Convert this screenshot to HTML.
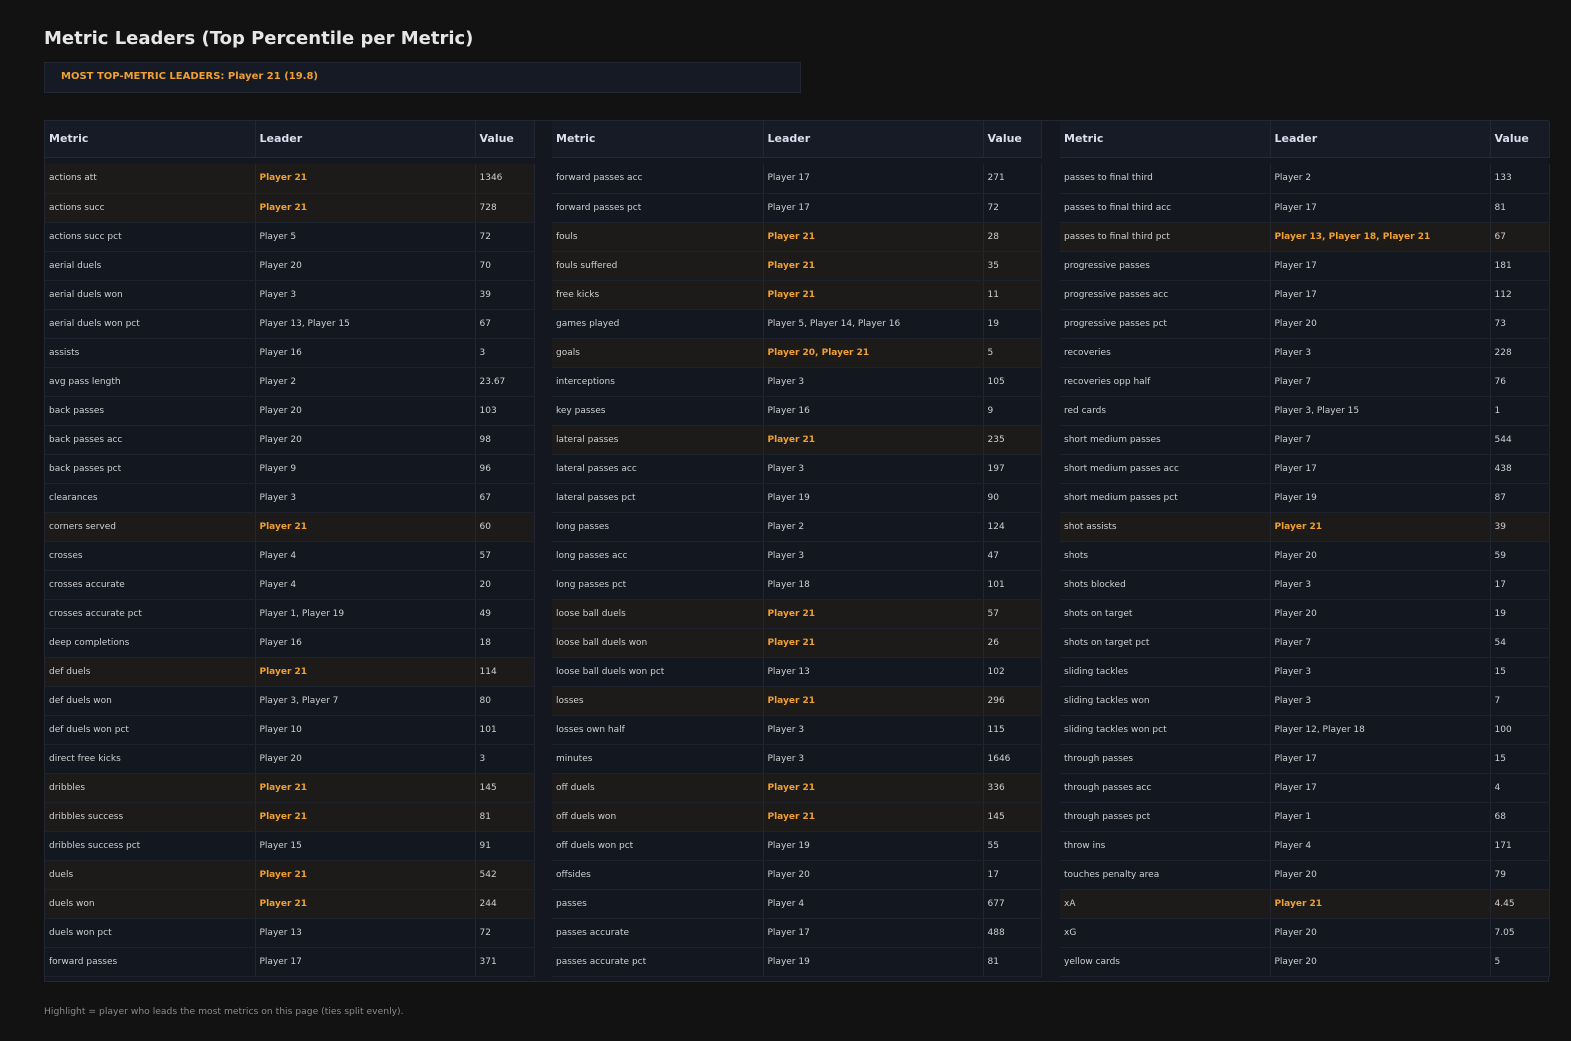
<!DOCTYPE html>
<html><head><meta charset="utf-8"><style>
*{margin:0;padding:0;box-sizing:border-box}
body{width:1571px;height:1041px;background:#121212;font-family:"DejaVu Sans","Liberation Sans",sans-serif;color:#d0d0d0;position:relative;overflow:hidden}
h1{position:absolute;left:44px;top:28px;font-size:18px;font-weight:bold;color:#e6e6e6}
.banner{position:absolute;left:44px;top:62px;width:757px;height:31px;background:#161a24;border:1px solid #232733;color:#f0a030;font-weight:bold;font-size:10px;padding:8px 0 0 16px}
.panel{position:absolute;left:44px;top:120px;width:1505px;height:862px;background:#141720;border:1px solid #232733}
table{position:absolute;top:0;border-collapse:collapse;table-layout:fixed;width:489px}
th{height:36px;background:#171b26;text-align:left;font-size:11px;font-weight:bold;color:#dde;padding-left:4px;border-right:1px solid #232733;border-bottom:1px solid #262a36}
td{height:29px;font-size:9px;color:#cfcfcf;padding-left:4px;border-right:1px solid #222631;border-bottom:1px solid #1e222c;background:#131720;white-space:nowrap}
tr.sp td{height:7px;border:none;background:#141720}
tr.h td{background:#1d1b19}
tr.h td:nth-child(2){color:#f0a030;font-weight:bold}
.foot{position:absolute;left:44px;top:1006px;font-size:9.2px;color:#8a8a8a}
</style></head><body>
<h1>Metric Leaders (Top Percentile per Metric)</h1>
<div class="banner">MOST TOP-METRIC LEADERS: Player 21 (19.8)</div>
<div class="panel">
<table style="left:0"><colgroup><col style="width:210px"><col style="width:220px"><col style="width:59px"></colgroup>
<tr><th>Metric</th><th>Leader</th><th>Value</th></tr><tr class="sp"><td></td><td></td><td></td></tr>
<tr class="h"><td>actions att</td><td>Player 21</td><td>1346</td></tr>
<tr class="h"><td>actions succ</td><td>Player 21</td><td>728</td></tr>
<tr><td>actions succ pct</td><td>Player 5</td><td>72</td></tr>
<tr><td>aerial duels</td><td>Player 20</td><td>70</td></tr>
<tr><td>aerial duels won</td><td>Player 3</td><td>39</td></tr>
<tr><td>aerial duels won pct</td><td>Player 13, Player 15</td><td>67</td></tr>
<tr><td>assists</td><td>Player 16</td><td>3</td></tr>
<tr><td>avg pass length</td><td>Player 2</td><td>23.67</td></tr>
<tr><td>back passes</td><td>Player 20</td><td>103</td></tr>
<tr><td>back passes acc</td><td>Player 20</td><td>98</td></tr>
<tr><td>back passes pct</td><td>Player 9</td><td>96</td></tr>
<tr><td>clearances</td><td>Player 3</td><td>67</td></tr>
<tr class="h"><td>corners served</td><td>Player 21</td><td>60</td></tr>
<tr><td>crosses</td><td>Player 4</td><td>57</td></tr>
<tr><td>crosses accurate</td><td>Player 4</td><td>20</td></tr>
<tr><td>crosses accurate pct</td><td>Player 1, Player 19</td><td>49</td></tr>
<tr><td>deep completions</td><td>Player 16</td><td>18</td></tr>
<tr class="h"><td>def duels</td><td>Player 21</td><td>114</td></tr>
<tr><td>def duels won</td><td>Player 3, Player 7</td><td>80</td></tr>
<tr><td>def duels won pct</td><td>Player 10</td><td>101</td></tr>
<tr><td>direct free kicks</td><td>Player 20</td><td>3</td></tr>
<tr class="h"><td>dribbles</td><td>Player 21</td><td>145</td></tr>
<tr class="h"><td>dribbles success</td><td>Player 21</td><td>81</td></tr>
<tr><td>dribbles success pct</td><td>Player 15</td><td>91</td></tr>
<tr class="h"><td>duels</td><td>Player 21</td><td>542</td></tr>
<tr class="h"><td>duels won</td><td>Player 21</td><td>244</td></tr>
<tr><td>duels won pct</td><td>Player 13</td><td>72</td></tr>
<tr><td>forward passes</td><td>Player 17</td><td>371</td></tr>
</table>
<table style="left:507px"><colgroup><col style="width:211px"><col style="width:220px"><col style="width:58px"></colgroup>
<tr><th>Metric</th><th>Leader</th><th>Value</th></tr><tr class="sp"><td></td><td></td><td></td></tr>
<tr><td>forward passes acc</td><td>Player 17</td><td>271</td></tr>
<tr><td>forward passes pct</td><td>Player 17</td><td>72</td></tr>
<tr class="h"><td>fouls</td><td>Player 21</td><td>28</td></tr>
<tr class="h"><td>fouls suffered</td><td>Player 21</td><td>35</td></tr>
<tr class="h"><td>free kicks</td><td>Player 21</td><td>11</td></tr>
<tr><td>games played</td><td>Player 5, Player 14, Player 16</td><td>19</td></tr>
<tr class="h"><td>goals</td><td>Player 20, Player 21</td><td>5</td></tr>
<tr><td>interceptions</td><td>Player 3</td><td>105</td></tr>
<tr><td>key passes</td><td>Player 16</td><td>9</td></tr>
<tr class="h"><td>lateral passes</td><td>Player 21</td><td>235</td></tr>
<tr><td>lateral passes acc</td><td>Player 3</td><td>197</td></tr>
<tr><td>lateral passes pct</td><td>Player 19</td><td>90</td></tr>
<tr><td>long passes</td><td>Player 2</td><td>124</td></tr>
<tr><td>long passes acc</td><td>Player 3</td><td>47</td></tr>
<tr><td>long passes pct</td><td>Player 18</td><td>101</td></tr>
<tr class="h"><td>loose ball duels</td><td>Player 21</td><td>57</td></tr>
<tr class="h"><td>loose ball duels won</td><td>Player 21</td><td>26</td></tr>
<tr><td>loose ball duels won pct</td><td>Player 13</td><td>102</td></tr>
<tr class="h"><td>losses</td><td>Player 21</td><td>296</td></tr>
<tr><td>losses own half</td><td>Player 3</td><td>115</td></tr>
<tr><td>minutes</td><td>Player 3</td><td>1646</td></tr>
<tr class="h"><td>off duels</td><td>Player 21</td><td>336</td></tr>
<tr class="h"><td>off duels won</td><td>Player 21</td><td>145</td></tr>
<tr><td>off duels won pct</td><td>Player 19</td><td>55</td></tr>
<tr><td>offsides</td><td>Player 20</td><td>17</td></tr>
<tr><td>passes</td><td>Player 4</td><td>677</td></tr>
<tr><td>passes accurate</td><td>Player 17</td><td>488</td></tr>
<tr><td>passes accurate pct</td><td>Player 19</td><td>81</td></tr>
</table>
<table style="left:1015px"><colgroup><col style="width:210px"><col style="width:220px"><col style="width:59px"></colgroup>
<tr><th>Metric</th><th>Leader</th><th>Value</th></tr><tr class="sp"><td></td><td></td><td></td></tr>
<tr><td>passes to final third</td><td>Player 2</td><td>133</td></tr>
<tr><td>passes to final third acc</td><td>Player 17</td><td>81</td></tr>
<tr class="h"><td>passes to final third pct</td><td>Player 13, Player 18, Player 21</td><td>67</td></tr>
<tr><td>progressive passes</td><td>Player 17</td><td>181</td></tr>
<tr><td>progressive passes acc</td><td>Player 17</td><td>112</td></tr>
<tr><td>progressive passes pct</td><td>Player 20</td><td>73</td></tr>
<tr><td>recoveries</td><td>Player 3</td><td>228</td></tr>
<tr><td>recoveries opp half</td><td>Player 7</td><td>76</td></tr>
<tr><td>red cards</td><td>Player 3, Player 15</td><td>1</td></tr>
<tr><td>short medium passes</td><td>Player 7</td><td>544</td></tr>
<tr><td>short medium passes acc</td><td>Player 17</td><td>438</td></tr>
<tr><td>short medium passes pct</td><td>Player 19</td><td>87</td></tr>
<tr class="h"><td>shot assists</td><td>Player 21</td><td>39</td></tr>
<tr><td>shots</td><td>Player 20</td><td>59</td></tr>
<tr><td>shots blocked</td><td>Player 3</td><td>17</td></tr>
<tr><td>shots on target</td><td>Player 20</td><td>19</td></tr>
<tr><td>shots on target pct</td><td>Player 7</td><td>54</td></tr>
<tr><td>sliding tackles</td><td>Player 3</td><td>15</td></tr>
<tr><td>sliding tackles won</td><td>Player 3</td><td>7</td></tr>
<tr><td>sliding tackles won pct</td><td>Player 12, Player 18</td><td>100</td></tr>
<tr><td>through passes</td><td>Player 17</td><td>15</td></tr>
<tr><td>through passes acc</td><td>Player 17</td><td>4</td></tr>
<tr><td>through passes pct</td><td>Player 1</td><td>68</td></tr>
<tr><td>throw ins</td><td>Player 4</td><td>171</td></tr>
<tr><td>touches penalty area</td><td>Player 20</td><td>79</td></tr>
<tr class="h"><td>xA</td><td>Player 21</td><td>4.45</td></tr>
<tr><td>xG</td><td>Player 20</td><td>7.05</td></tr>
<tr><td>yellow cards</td><td>Player 20</td><td>5</td></tr>
</table>
</div>
<div class="foot">Highlight = player who leads the most metrics on this page (ties split evenly).</div>
</body></html>
